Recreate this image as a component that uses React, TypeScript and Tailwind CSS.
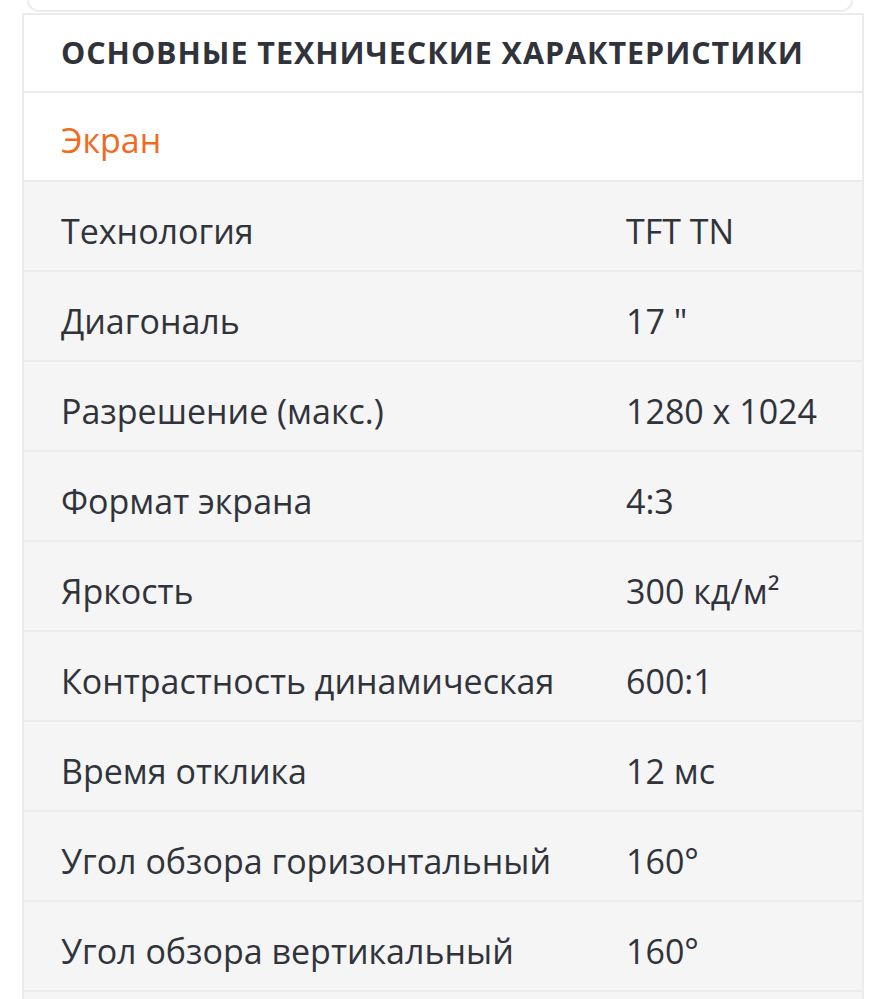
const specs: [string, string][] = [
  ['Технология', 'TFT TN'],
  ['Диагональ', '17 "'],
  ['Разрешение (макс.)', '1280 x 1024'],
  ['Формат экрана', '4:3'],
  ['Яркость', '300 кд/м²'],
  ['Контрастность динамическая', '600:1'],
  ['Время отклика', '12 мс'],
  ['Угол обзора горизонтальный', '160°'],
  ['Угол обзора вертикальный', '160°'],
];

export default function App() {
  return (
    <div className="h-[999px] overflow-hidden bg-white font-['Open_Sans',sans-serif] text-[#31333b]">
      {/* bottom edge of the card above */}
      <div className="mx-[27px] h-[12px] rounded-b-[22px] border-x-2 border-b-2 border-[#ededed]" />

      <div className="ml-[22px] mt-[1px] w-[842px] border-2 border-b-0 border-[#ebebeb]">
        <div className="flex h-[78px] items-center border-b-2 border-[#ebebeb] px-[37px]">
          <h2 className="text-[30.5px] font-bold tracking-[0.95px]">ОСНОВНЫЕ ТЕХНИЧЕСКИЕ ХАРАКТЕРИСТИКИ</h2>
        </div>
        <div className="flex h-[89px] items-center border-b-2 border-[#ebebeb] px-[37px] pt-[8px]">
          <span className="text-[34px] text-[#f26b1d]">Экран</span>
        </div>
        {specs.map(([name, value]) => (
          <div
            key={name}
            className="flex h-[90px] items-center border-b-2 border-[#ebebeb] bg-[#f5f5f5] px-[37px] pt-[10px] text-[34px]"
          >
            <span className="w-[565px] shrink-0">{name}</span>
            <span>{value}</span>
          </div>
        ))}
        <div className="h-[90px] bg-[#f5f5f5]" />
      </div>
    </div>
  );
}
